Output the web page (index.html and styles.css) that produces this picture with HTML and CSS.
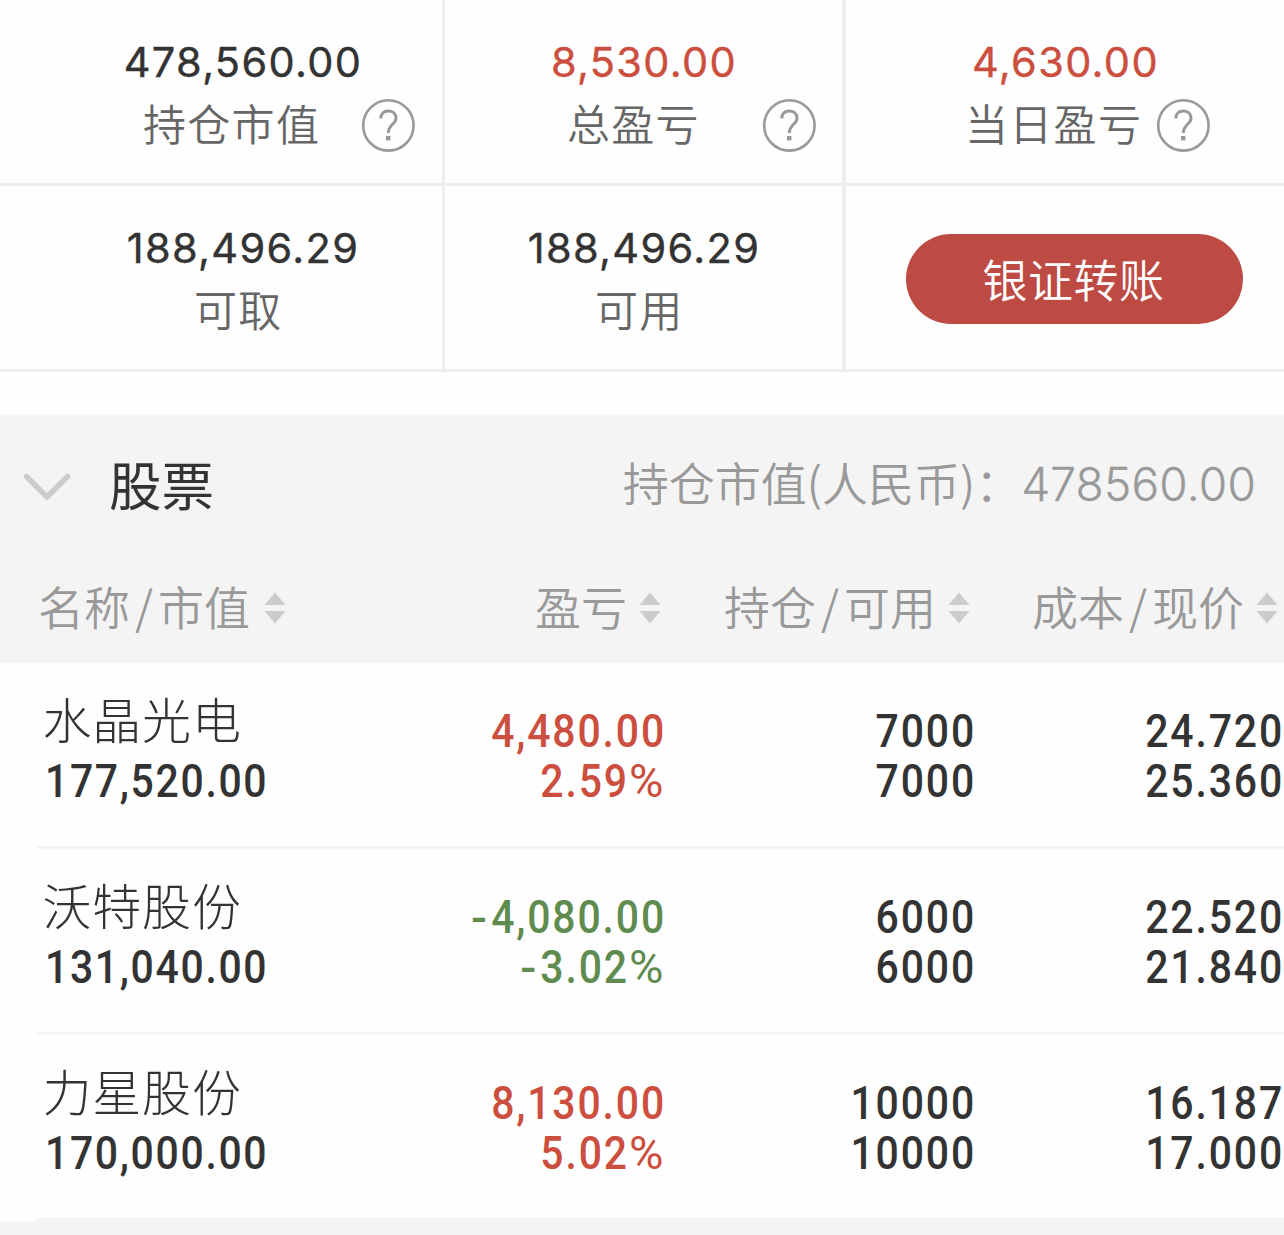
FILE: index.html
```html
<!DOCTYPE html>
<html lang="zh-CN">
<head>
<meta charset="utf-8">
<title>持仓</title>
<link rel="stylesheet" href="styles.css">
</head>
<body>
<svg class="defs" width="0" height="0">
  <symbol id="help" viewBox="0 0 54 54">
    <circle cx="27.400" cy="27.400" r="25.200" fill="none" stroke="#999" stroke-width="2.600"/>
    <path d="M19.800 20.500C19.800 15.500 23 13 27.300 13S35 15.800 35 20.400C35 26 27.300 26.500 27.300 35" fill="none" stroke="#999" stroke-width="3"/>
    <rect x="25" y="38" width="4.400" height="4.400" fill="#999"/>
  </symbol>
  <symbol id="sort" viewBox="0 0 22 32">
    <path d="M11 .5 21.500 13H.5ZM11 31.500.5 19H21.500Z" fill="#ccc"/>
  </symbol>
</svg>
<main class="page">
  <section class="summary">
    <div class="cell first">
      <div class="amount">478,560.00</div>
      <div class="label market"><span>持仓市值</span><svg class="help"><use href="#help"/></svg></div>
    </div>
    <div class="cell second">
      <div class="amount red">8,530.00</div>
      <div class="label total"><span>总盈亏</span><svg class="help"><use href="#help"/></svg></div>
    </div>
    <div class="cell third">
      <div class="amount red">4,630.00</div>
      <div class="label daily"><span>当日盈亏</span><svg class="help"><use href="#help"/></svg></div>
    </div>
    <div class="cell first">
      <div class="amount">188,496.29</div>
      <div class="label cash"><span>可取</span></div>
    </div>
    <div class="cell second">
      <div class="amount">188,496.29</div>
      <div class="label usable"><span>可用</span></div>
    </div>
    <div class="cell third action">
      <button class="transfer">银证转账</button>
    </div>
  </section>

  <section class="group">
    <header class="group-head">
      <svg class="chevron" viewBox="0 0 48 28"><path d="M3.500 3.500 24 24 44.500 3.500" fill="none" stroke="#ccc" stroke-width="5.500" stroke-linecap="round" stroke-linejoin="round"/></svg>
      <h2 class="group-title">股票</h2>
      <div class="group-value">持仓市值(人民币)：<span class="group-number">478560.00</span></div>
    </header>
    <div class="columns">
      <div class="col c1">名称<i class="slash">/</i>市值<svg class="sort"><use href="#sort"/></svg></div>
      <div class="col c2">盈亏<svg class="sort"><use href="#sort"/></svg></div>
      <div class="col c3">持仓<i class="slash">/</i>可用<svg class="sort"><use href="#sort"/></svg></div>
      <div class="col c4">成本<i class="slash">/</i>现价<svg class="sort"><use href="#sort"/></svg></div>
    </div>
  </section>

  <section class="rows">
    <article class="row">
      <div class="stock"><div class="name">水晶光电</div><div class="value">177,520.00</div></div>
      <div class="num red"><div>4,480.00</div><div>2.59<span class="pct">%</span></div></div>
      <div class="num"><div>7000</div><div>7000</div></div>
      <div class="num"><div>24.720</div><div>25.360</div></div>
    </article>
    <article class="row">
      <div class="stock"><div class="name">沃特股份</div><div class="value">131,040.00</div></div>
      <div class="num green"><div><span class="minus">-</span>4,080.00</div><div><span class="minus">-</span>3.02<span class="pct">%</span></div></div>
      <div class="num"><div>6000</div><div>6000</div></div>
      <div class="num"><div>22.520</div><div>21.840</div></div>
    </article>
    <article class="row">
      <div class="stock"><div class="name">力星股份</div><div class="value">170,000.00</div></div>
      <div class="num red"><div>8,130.00</div><div>5.02<span class="pct">%</span></div></div>
      <div class="num"><div>10000</div><div>10000</div></div>
      <div class="num"><div>16.187</div><div>17.000</div></div>
    </article>
  </section>
  <footer class="foot"></footer>
</main>
</body>
</html>
```
FILE: styles.css
```css
* { box-sizing: border-box; }
body {
  margin: 0;
  background: #fefefe;
  color: #333;
  font-family: "Noto Sans CJK SC", sans-serif;
  overflow: hidden;
}
.defs { display: block; }
.page { width: 1284px; height: 1235px; display: flex; flex-direction: column; overflow: hidden; }
.red { color: #cb4e3e; }
.green { color: #5f8c4e; }

.summary {
  display: grid;
  grid-template-columns: 445px 401px 438px;
  grid-template-rows: 186px 186px;
}
.cell { border-bottom: 3px solid #eee; padding-top: 36px; }
.first { border-right: 3px solid #eee; }
.second { border-right: 4px solid #eee; }
.amount {
  height: 52px;
  padding-left: 1px;
  line-height: 52px;
  text-align: center;
  font-family: Inter, sans-serif;
  font-size: 41.5px;
  font-weight: 400;
  letter-spacing: 1.35px;
  -webkit-text-stroke: .4px currentColor;
}
.first .amount { padding-left: 44px; }
.label {
  display: flex;
  align-items: flex-start;
  height: 60px;
  margin-top: 4px;
  line-height: 60px;
  font-size: 43px;
  font-weight: 350;
  letter-spacing: 1.3px;
  color: #666;
}
.market { padding-left: 143px; }
.total { padding-left: 122px; }
.daily { padding-left: 119px; }
.cash { padding-left: 194px; }
.usable { padding-left: 150px; }
.help { width: 54px; height: 54px; margin-top: 6px; flex: none; }
.market .help { margin-left: 41px; }
.total .help { margin-left: 62px; }
.daily .help { margin-left: 13.5px; }
.action { padding: 48px 0 0 60px; }
.transfer {
  display: block;
  width: 337px;
  height: 90px;
  padding: 0 2px 2px 0;
  border: 0;
  border-radius: 45px;
  background: #be4a44;
  color: #fff;
  font-family: inherit;
  font-size: 45px;
  font-weight: 350;
  letter-spacing: .5px;
}

.group { height: 248px; margin-top: 43px; background: #f4f4f4; }
.group-head { display: flex; height: 140px; padding: 0 28px 0 23px; }
.chevron { width: 48px; height: 28px; margin-top: 58px; }
.group-title { margin: 0 0 0 38px; font-size: 52.5px; font-weight: 400; line-height: 136px; }
.group-value { margin-left: auto; font-size: 46px; font-weight: 350; line-height: 133px; color: #999; white-space: nowrap; }
.group-number { font-family: Inter, sans-serif; font-weight: 300; letter-spacing: .2px; -webkit-text-stroke: .3px currentColor; }
.columns {
  display: grid;
  grid-template-columns: 286px 375px 309px 308px;
  font-size: 46px;
  font-weight: 350;
  line-height: 100px;
  color: #999;
}
.col { display: flex; align-items: flex-start; justify-content: flex-end; white-space: nowrap; }
.slash { width: 28px; text-align: center; font-style: normal; }
.sort { width: 22px; height: 32px; margin: 37px 0 0 12px; }
.c1 .sort { margin-left: 14px; }

.row {
  position: relative;
  display: grid;
  grid-template-columns: 400px 266px 310px 308px;
  height: 186px;
  font-family: Roboto, sans-serif;
  font-size: 46.5px;
  font-weight: 500;
  line-height: 50px;
  letter-spacing: 2.1px;
}
.row::after { content: ""; position: absolute; left: 37px; right: 0; bottom: 0; height: 3px; background: #f4f4f4; }
.stock { padding: 21px 0 0 42.5px; }
.name {
  font-family: "Noto Sans CJK SC", sans-serif;
  font-size: 49px;
  font-weight: 300;
  line-height: 68px;
  height: 72px;
  letter-spacing: .8px;
}
.value { margin-left: 2.5px; letter-spacing: 1.9px; transform: scaleX(.88); transform-origin: left; }
.num { padding-top: 43px; text-align: right; transform: scaleX(.88); transform-origin: right; }
.pct { display: inline-block; margin-right: 6px; font-weight: 400; transform: scaleX(1.15); transform-origin: left; }
.minus { display: inline-block; margin-right: 2px; transform: translateY(1px) scaleX(1.15); transform-origin: right; }
.foot { flex: 1; background: #f4f4f4; }
```
